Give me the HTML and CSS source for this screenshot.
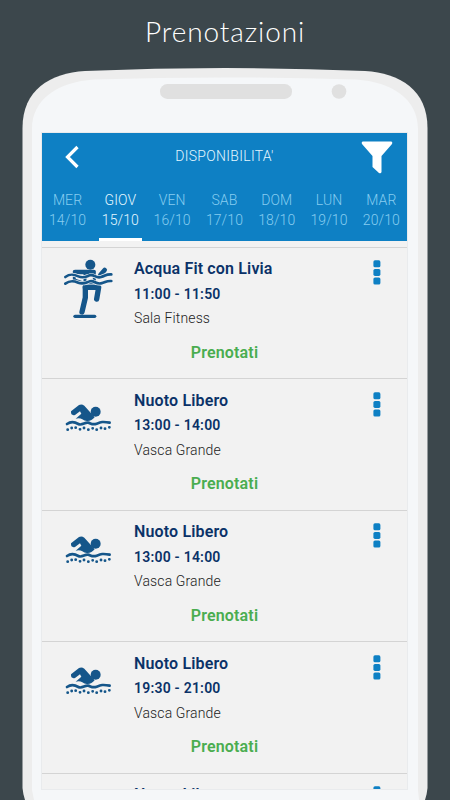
FILE: index.html
```html
<!DOCTYPE html>
<html lang="it">
<head>
<meta charset="utf-8">
<title>Prenotazioni</title>
<link rel="stylesheet" href="styles.css">
</head>
<body>
<svg class="defs" aria-hidden="true">
  <symbol id="swim" viewBox="0 0 210 150">
    <circle cx="122" cy="65" r="15" fill="#15568a"/>
    <path d="M48 64 72 45Q80 41 88 47L119 82Q110 93 98 93Q89 94 82 88Q74 83 62 86L79 71 75 64 60 75Q47 78 48 64Z" fill="#15568a"/>
    <g fill="none" stroke="#15568a" stroke-linecap="round">
      <path d="M36 102C50 92 60 96 70 102S90 96 99 98 112 106 125 101 143 94 164 98" stroke-width="8"/>
      <path d="M38 119h.1M50 114h.1M62 113h.1M75 118h.1M87 114h.1M100 119h.1M113 115h.1M125 119h.1M138 114h.1M150 116h.1M163 112h.1" stroke-width="8.5"/>
    </g>
  </symbol>
  <symbol id="aqua" viewBox="0 0 210 225">
    <g fill="none" stroke="#15568a" stroke-linecap="round" stroke-linejoin="round">
      <circle cx="106" cy="44" r="15" fill="#15568a" stroke="none"/>
      <path d="M60 66H116M136 75 149 60" stroke-width="14"/>
      <path d="M58 76V90L82 98M90 72H118V98H90Z" stroke-width="9"/>
      <path d="M91 111 91 143 81 186" stroke-width="16"/>
      <path d="M91 112H131L125 147" stroke-width="16"/>
      <path d="M60 199H119" stroke-width="10"/>
      <path d="M31 81C45 71 55 72 70 79S92 80 105 76 122 86 138 81 153 72 169 73M31 101C45 91 55 92 70 98S92 98 105 94 122 104 138 100 153 92 169 93" stroke="#f2f2f2" stroke-width="12"/>
      <path d="M31 81C45 71 55 72 70 79S92 80 105 76 122 86 138 81 153 72 169 73M31 101C45 91 55 92 70 98S92 98 105 94 122 104 138 100 153 92 169 93" stroke-width="8"/>
    </g>
  </symbol>
  <symbol id="dots" viewBox="0 0 8 26">
    <g fill="#0e80c4"><rect x=".4" y=".3" width="7" height="7" rx="1.6"/><rect x=".4" y="8.9" width="7" height="7" rx="1.6"/><rect x=".4" y="17.5" width="7" height="7" rx="1.6"/></g>
  </symbol>
</svg>
<main class="page">
  <svg class="frame" viewBox="0 0 450 800" aria-hidden="true">
    <path d="M22.5 128C22.5 90 50 73 85 71Q155 68 225 68T365 71C400 73 427.5 90 427.5 128V788Q427 794 425 800H25Q23 794 22.5 788Z" fill="#ededed"/>
    <path d="M32 129C32 99 58 82 94 79.5Q160 77.5 225 77.5T356 79.5C392 82 418 99 418 129V790L419 800H34L32 790Z" fill="#f5f7f9"/>
    <rect x="160" y="84" width="132" height="15" rx="7.3" fill="#e0e0e0"/>
    <circle cx="339" cy="91.5" r="7.3" fill="#e0e0e0"/>
  </svg>
  <div class="content">
    <h1 class="headline">Prenotazioni</h1>
    <section class="screen">
      <header class="bar">
        <div class="toolbar">
          <svg class="back" viewBox="0 0 16 24"><path d="M13.5 2 3.5 12 13.5 22" fill="none" stroke="#fff" stroke-width="3.2"/></svg>
          <span class="title">DISPONIBILITA'</span>
          <svg class="filter" viewBox="0 0 32 34"><path d="M2 .5H30Q32 1 31 3L20.5 15V31Q20 33 18 32L11.5 26V15L1 3Q0 1 2 .5Z" fill="#fff"/></svg>
        </div>
        <nav class="days">
          <div class="day">MER<br>14/10</div>
          <div class="day active">GIOV<br>15/10</div>
          <div class="day">VEN<br>16/10</div>
          <div class="day">SAB<br>17/10</div>
          <div class="day">DOM<br>18/10</div>
          <div class="day">LUN<br>19/10</div>
          <div class="day">MAR<br>20/10</div>
        </nav>
      </header>
      <div class="list">
        <article class="row">
          <svg class="icon tall"><use href="#aqua"/></svg>
          <div class="info"><h2>Acqua Fit con Livia</h2><b>11:00 - 11:50</b><p>Sala Fitness</p></div>
          <svg class="dots"><use href="#dots"/></svg>
          <div class="book">Prenotati</div>
        </article>
        <article class="row">
          <svg class="icon"><use href="#swim"/></svg>
          <div class="info"><h2>Nuoto Libero</h2><b>13:00 - 14:00</b><p>Vasca Grande</p></div>
          <svg class="dots"><use href="#dots"/></svg>
          <div class="book">Prenotati</div>
        </article>
        <article class="row">
          <svg class="icon"><use href="#swim"/></svg>
          <div class="info"><h2>Nuoto Libero</h2><b>13:00 - 14:00</b><p>Vasca Grande</p></div>
          <svg class="dots"><use href="#dots"/></svg>
          <div class="book">Prenotati</div>
        </article>
        <article class="row">
          <svg class="icon"><use href="#swim"/></svg>
          <div class="info"><h2>Nuoto Libero</h2><b>19:30 - 21:00</b><p>Vasca Grande</p></div>
          <svg class="dots"><use href="#dots"/></svg>
          <div class="book">Prenotati</div>
        </article>
        <article class="row">
          <span></span>
          <div class="info"><h2>Nuoto Libero</h2></div>
          <svg class="dots"><use href="#dots"/></svg>
        </article>
      </div>
    </section>
  </div>
</main>
</body>
</html>
```
FILE: styles.css
```css
* { box-sizing: border-box; margin: 0; padding: 0; }
body { background: #3c474c; font-family: Roboto, sans-serif; overflow: hidden; }
svg { display: block; }
.defs { display: none; }
.page { display: grid; width: 450px; height: 800px; overflow: hidden; }
.frame, .content { grid-area: 1 / 1; width: 450px; height: 800px; }
.content { z-index: 1; display: flex; flex-direction: column; align-items: center; }
.headline {
  height: 133px; padding-top: 13px; flex: none;
  font: 300 28px/36px Lato, sans-serif; letter-spacing: .9px; color: #fff;
}
.screen {
  width: 365px; height: 656px; margin-right: 1px; overflow: hidden; flex: none;
  display: flex; flex-direction: column;
  background: #f2f2f2; box-shadow: 0 0 0 1px #e9ebed;
}
.bar { height: 108px; flex: none; background: #0e80c4; color: #fff; }
.toolbar {
  height: 56px; padding: 8px 14px 0 22px;
  display: grid; grid-template-columns: 24px 1fr 32px; align-items: start;
}
.back { width: 16px; height: 24px; margin-top: 4px; }
.title { text-align: center; font-size: 14px; font-weight: 300; line-height: 20px; padding-top: 5px; letter-spacing: .3px; color: #e4f7ff; }
.filter { width: 32px; height: 34px; }
.days { display: grid; grid-template-columns: repeat(7, 52.3px); height: 52px; margin-left: -.6px; }
.day {
  text-align: center; font-size: 14px; font-weight: 300; line-height: 19.5px;
  color: #86cdf0; padding-top: 2px; letter-spacing: .1px;
}
.active { color: #e4f7ff; justify-self: center; width: 43px; margin-left: 1px; border-bottom: 3px solid #fff; }
.list { padding-top: 5.5px; flex: none; }
.row {
  height: 131.5px; border-top: 1px solid #d4d4d4;
  display: grid; grid-template-columns: 92px 1fr 31px; grid-template-rows: 93px 1fr;
}
.icon { width: 70px; height: 50px; margin: 11px 0 0 13px; }
.tall { height: 75px; margin-top: 2.5px; }
.info { padding-top: 10.5px; }
h2 { font-size: 16px; line-height: 22px; font-weight: 600; letter-spacing: .15px; color: #0b3268; }
b { display: block; font-size: 14px; line-height: 20px; padding-top: 3.5px; height: 26px; font-weight: 600; letter-spacing: .22px; color: #0b3268; }
p { font-size: 14px; line-height: 20px; font-weight: 300; letter-spacing: .13px; color: #222; padding-top: 2px; }
.dots { width: 8px; height: 26px; margin: 12.5px 0 0 -3.2px; justify-self: start; }
.book { grid-column: 1 / -1; text-align: center; font-size: 16px; line-height: 24px; font-weight: 600; letter-spacing: .17px; color: #4aad50; }
```
